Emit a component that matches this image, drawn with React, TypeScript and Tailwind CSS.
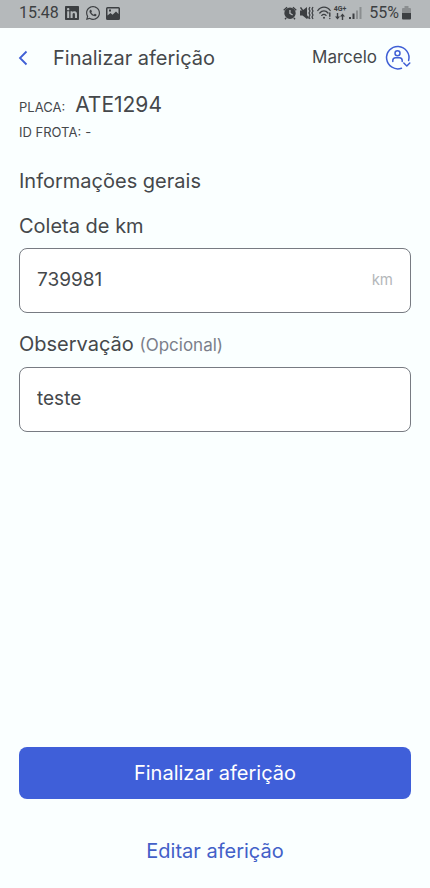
import type { InputHTMLAttributes, ReactNode } from "react";
import { FaLinkedin, FaWhatsapp } from "react-icons/fa";

function ImageIcon() {
  return (
    <svg viewBox="0 0 14 13" className="h-[13px] w-[14px]" fill="currentColor">
      <path
        fillRule="evenodd"
        d="M1.500 0h11A1.500 1.500 0 0 1 14 1.500v10a1.500 1.500 0 0 1-1.500 1.500h-11A1.500 1.500 0 0 1 0 11.500v-10A1.500 1.500 0 0 1 1.500 0zM1.500 1.500v7l3-2.500 2 1.700L10 4.500l2.500 2.500V1.500zM3 2.500h2v2H3z"
      />
    </svg>
  );
}

function AlarmIcon() {
  return (
    <svg viewBox="0 0 14 14" className="size-[14px]" fill="currentColor">
      <path
        fillRule="evenodd"
        d="M7 1.500a5.700 5.700 0 1 1 0 11.400A5.700 5.700 0 0 1 7 1.500zM6.300 4v3.800l3 1.800.7-1.100-2.400-1.400V4z"
      />
      <path d="M.3 3.800L3.600.8l.9 1L1.200 4.800zM13.700 3.800L10.400.8l-.9 1 3.300 3zM2.500 11.500l1.200 1-1.200 1.200-1-1zM11.500 11.500l-1.200 1 1.200 1.200 1-1z" />
    </svg>
  );
}

function MutedIcon() {
  return (
    <svg viewBox="0 0 14 14" className="size-[14px]" fill="none" stroke="currentColor">
      <path d="M0 4.500h2.500L7 1v12L2.500 9.500H0z" fill="currentColor" stroke="none" />
      <path d="M.5 1.500l8 11" strokeWidth="1.400" />
      <path d="M10 1l-1 2 1 2-1 2 1 2-1 2 1 2M13 1l-1 2 1 2-1 2 1 2-1 2 1 2" strokeWidth="1.200" />
    </svg>
  );
}

function WifiIcon() {
  return (
    <svg viewBox="0 0 14 14" className="size-[14px]" fill="none" stroke="currentColor" strokeWidth="1.300" strokeLinecap="round">
      <path d="M.8 4.500C4-.1 10-.1 13.200 4.500M2.800 7c2.300-2.900 6-2.900 8.200 0M4.800 9.400c1.300-1.400 3-1.400 4.200 0" />
      <circle cx="7" cy="11.800" r="1" fill="currentColor" stroke="none" />
      <path d="M12.800 7v3.200M12.800 12.500v.1" strokeWidth="1.400" />
    </svg>
  );
}

function DataArrows() {
  return (
    <svg viewBox="0 0 12 7" className="h-[7px] w-3" fill="currentColor">
      <path d="M2.800 0h1.400v3.500H6L3.500 6.500 1 3.500h1.800zM7.800 7h1.400V3.500H11L8.500.5 6 3.500h1.800z" />
    </svg>
  );
}

function SignalIcon() {
  return (
    <svg viewBox="0 0 13 12" className="h-3 w-[13px]" fill="currentColor">
      <path d="M0 10h2v2H0zM3.500 6.500h2V12h-2z" />
      <path d="M7 3.500h2V12H7zM10.500 0h2v12h-2z" opacity=".35" />
    </svg>
  );
}

function BatteryIcon() {
  return (
    <svg viewBox="0 0 9 14" className="h-[14px] w-[9px]" fill="currentColor">
      <path d="M2.500 0h4v2H8a1 1 0 0 1 1 1v4H0V3a1 1 0 0 1 1-1h1.500z" opacity=".35" />
      <path d="M0 7h9v5.500a1 1 0 0 1-1 1H1a1 1 0 0 1-1-1z" />
    </svg>
  );
}

function BackIcon() {
  return (
    <svg viewBox="0 0 10 16" className="h-4 w-[10px]" fill="none" stroke="currentColor" strokeWidth="1.800">
      <path d="M8.500 1.500L2 8l6.500 6.500" />
    </svg>
  );
}

function UserIcon() {
  return (
    <svg viewBox="0 0 26 26" className="size-[26px]" fill="none" stroke="currentColor" strokeWidth="1.500" strokeLinecap="round" strokeLinejoin="round">
      <path d="M16.500 23.200A11.200 11.200 0 1 1 23.600 15.500" />
      <circle cx="12.500" cy="8.300" r="2.500" />
      <path d="M7.800 16.500v-1c0-1.800 1.200-2.800 2.800-2.800h3.800c1.600 0 2.800 1 2.800 2.800v1" />
      <path d="M18.800 18l3 3 3-3" />
    </svg>
  );
}

function StatusBar() {
  return (
    <div className="flex h-7 items-center justify-between bg-[#b5b9bb] px-[19px] pb-0.5 font-[Roboto,sans-serif] text-base text-[#3c3f42]">
      <div className="flex items-center gap-[5px]">
        <span>15:48</span>
        <FaLinkedin className="size-4" />
        <FaWhatsapp className="size-4" />
        <ImageIcon />
      </div>
      <div className="flex items-center gap-[3px]">
        <AlarmIcon />
        <MutedIcon />
        <WifiIcon />
        <span className="flex flex-col items-center text-[7px] leading-[7px] font-bold">
          4G+
          <DataArrows />
        </span>
        <SignalIcon />
        <span className="ml-1">55%</span>
        <BatteryIcon />
      </div>
    </div>
  );
}

type FieldProps = InputHTMLAttributes<HTMLInputElement> & {
  id: string;
  label: ReactNode;
  unit?: string;
};

function Field({ id, label, unit, ...input }: FieldProps) {
  return (
    <div className="flex flex-col gap-2">
      <label htmlFor={id} className="text-xl leading-7">
        {label}
      </label>
      <div className="flex h-[65px] items-center rounded-lg border border-[#777b82] bg-white px-[17px]">
        <input id={id} className="min-w-0 flex-1 bg-transparent text-[19px] outline-none" {...input} />
        {unit && <span className="text-[15px] text-[#b4b7ba]">{unit}</span>}
      </div>
    </div>
  );
}

export default function App() {
  return (
    <div className="flex min-h-screen flex-col bg-[#faffff] font-[Inter,sans-serif] text-[#45484b]">
      <StatusBar />
      <header className="flex h-[60px] items-center justify-between pr-[19px] pl-[18px]">
        <div className="flex items-center gap-[25px]">
          <button type="button" aria-label="Voltar" className="text-[#3f5fd5]">
            <BackIcon />
          </button>
          <h1 className="text-xl">Finalizar aferição</h1>
        </div>
        <button type="button" className="flex items-center gap-2 text-[17px]">
          Marcelo
          <span className="text-[#3f5fd5]">
            <UserIcon />
          </span>
        </button>
      </header>
      <main className="flex flex-1 flex-col px-[19px] pt-px pb-[11px]">
        <dl className="flex flex-col">
          <div className="flex h-8 items-baseline gap-2.5">
            <dt className="text-[13px]">PLACA:</dt>
            <dd className="text-[21px] leading-8">ATE1294</dd>
          </div>
          <div className="flex h-6 items-center gap-1 text-[13px]">
            <dt>ID FROTA:</dt>
            <dd>-</dd>
          </div>
        </dl>
        <h2 className="mt-[22px] text-xl leading-7">Informações gerais</h2>
        <form className="mt-[17px] flex flex-1 flex-col gap-[17px]">
          <Field id="km" label="Coleta de km" unit="km" inputMode="numeric" defaultValue="739981" />
          <Field
            id="observacao"
            label={
              <>
                Observação <span className="text-[17px] text-[#7b7e8a]">(Opcional)</span>
              </>
            }
            defaultValue="teste"
          />
          <div className="mt-auto flex flex-col gap-[26px] text-xl">
            <button type="submit" className="h-[52px] rounded-lg bg-[#3f5fd9] text-white">
              Finalizar aferição
            </button>
            <button type="button" className="h-[52px] text-[#4260c8]">
              Editar aferição
            </button>
          </div>
        </form>
      </main>
    </div>
  );
}
